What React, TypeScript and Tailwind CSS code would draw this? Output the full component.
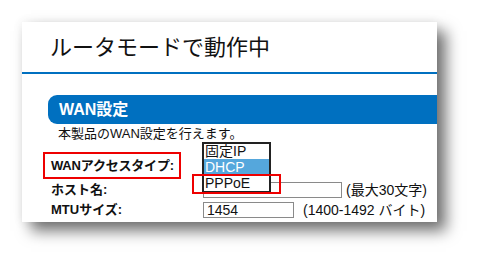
const font = { fontFamily: '"Liberation Sans", "Noto Sans CJK JP", sans-serif' };

export default function App() {
  return (
    <div className="w-[479px] h-[265px] bg-white pt-[22px] pl-[22px]" style={font}>
      <div className="relative w-[415px] h-[200px] bg-white shadow-[9px_9px_14px_rgba(0,0,0,0.55),0_0_10px_rgba(0,0,0,0.08)] text-[#111]">
        <div className="h-[50px] flex items-center pl-[28px] pt-[1px] text-[22px] leading-none">
          ルータモードで動作中
        </div>
        <div className="h-[2px] bg-[#0070c0]" />

        <div className="mt-[21px] ml-[26px] h-[29px] bg-[#0070c0] rounded-l-[9px] flex items-center pl-[11px] text-white font-bold text-[16px] leading-none">
          WAN設定
        </div>
        <div className="pl-[36px] text-[13px] leading-[15px] mt-[2px]">本製品のWAN設定を行えます。</div>

        <div className="mt-[11px] pl-[21px] flex flex-col text-[13px] leading-[16px]">
          <div className="h-[27px] flex items-center">
            <span className="h-[27px] w-[138px] border-2 border-[#e00] flex items-center pl-[6px] font-bold whitespace-nowrap tracking-[-0.2px]">
              WANアクセスタイプ:
            </span>
          </div>
          <div className="h-[20px] mt-[1px] flex items-center">
            <span className="w-[160px] pl-[8px] font-bold whitespace-nowrap">ホスト名:</span>
            <span className="w-[139px] h-[16px] border border-[#8a8a8a]" />
            <span className="ml-[4px] text-[14px] whitespace-nowrap">(最大30文字)</span>
          </div>
          <div className="h-[20px] flex items-center">
            <span className="w-[160px] pl-[8px] font-bold whitespace-nowrap">MTUサイズ:</span>
            <span className="w-[91px] h-[16px] border border-[#8a8a8a] flex items-center pl-[3px] text-[14px]">1454</span>
            <span className="ml-[9px] text-[14px] whitespace-nowrap">(1400-1492 バイト)</span>
          </div>
        </div>

        <div className="absolute left-[180px] top-[120px] w-[69px] h-[51px] bg-white border-2 border-[#222] flex flex-col text-[14px] leading-[15px]">
          <div className="h-[15px] pl-[1px]">固定IP</div>
          <div className="h-[16px] pl-[1px] pt-[1px] bg-[#55a7dc] text-white">DHCP</div>
          <div className="h-[16px] pl-[1px] pt-[1px]">PPPoE</div>
        </div>
        <div className="absolute left-[170px] top-[152px] w-[89px] h-[20px] border-2 border-[#e00]" />
      </div>
    </div>
  );
}
